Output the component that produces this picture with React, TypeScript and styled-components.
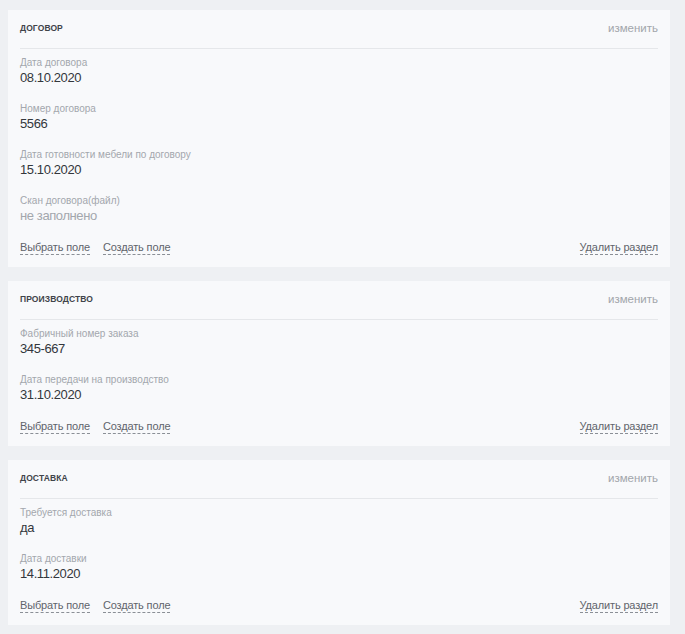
import React from "react";
import styled, { createGlobalStyle } from "styled-components";

const GlobalStyle = createGlobalStyle`
  html, body {
    margin: 0;
    padding: 0;
    background: #eef0f3;
  }
  body {
    font-family: "Liberation Sans", Arial, sans-serif;
    -webkit-font-smoothing: antialiased;
  }
`;

// Page layout
const Page = styled.div`
  display: flex;
  flex-direction: column;
  gap: 14px;
  padding: 10px 15px 8px 8px;
  min-height: 634px;
  box-sizing: border-box;
`;

// Section card
const Card = styled.section`
  background: #f8f9fb;
  padding: 0 12px 12px;
`;

const CardHeader = styled.div`
  display: flex;
  align-items: center;
  justify-content: space-between;
  height: 39px;
  padding-bottom: 2px;
  box-sizing: border-box;
  border-bottom: 1px solid #e5e7ea;
`;

const CardTitle = styled.h3`
  margin: 0;
  font-size: 8.5px;
  font-weight: 700;
  color: #3f4349;
  text-transform: uppercase;
  letter-spacing: 0.1px;
`;

const EditLink = styled.span`
  font-size: 11.5px;
  color: #a2a6ab;
  cursor: pointer;
`;

const FieldList = styled.div`
  display: flex;
  flex-direction: column;
  gap: 17px;
  padding-top: 8px;
`;

const Field = styled.div`
  display: flex;
  flex-direction: column;
  gap: 1px;
`;

const FieldLabel = styled.span`
  font-size: 10px;
  line-height: 12px;
  color: #a3a7ad;
`;

const FieldValue = styled.span<{ $empty?: boolean }>`
  font-size: 13px;
  line-height: 16px;
  letter-spacing: -0.4px;
  color: ${(p) => (p.$empty ? "#a3a7ad" : "#33373c")};
`;

const CardFooter = styled.div`
  display: flex;
  align-items: center;
  gap: 13px;
  margin-top: 17px;
`;

const ActionLink = styled.span<{ $push?: boolean }>`
  display: inline-block;
  font-size: 11px;
  line-height: 13px;
  letter-spacing: -0.15px;
  color: #5f646b;
  border-bottom: 1px dashed #8a8f96;
  cursor: pointer;
  ${(p) => (p.$push ? "margin-left: auto;" : "")}
`;

type FieldData = { label: string; value?: string };
type SectionData = { title: string; fields: FieldData[] };

const sections: SectionData[] = [
  {
    title: "Договор",
    fields: [
      { label: "Дата договора", value: "08.10.2020" },
      { label: "Номер договора", value: "5566" },
      { label: "Дата готовности мебели по договору", value: "15.10.2020" },
      { label: "Скан договора(файл)" },
    ],
  },
  {
    title: "Производство",
    fields: [
      { label: "Фабричный номер заказа", value: "345-667" },
      { label: "Дата передачи на производство", value: "31.10.2020" },
    ],
  },
  {
    title: "Доставка",
    fields: [
      { label: "Требуется доставка", value: "да" },
      { label: "Дата доставки", value: "14.11.2020" },
    ],
  },
];

export default function App(): JSX.Element {
  return (
    <>
      <GlobalStyle />
      <Page>
        {sections.map((section) => (
          <Card key={section.title}>
            <CardHeader>
              <CardTitle>{section.title}</CardTitle>
              <EditLink>изменить</EditLink>
            </CardHeader>
            <FieldList>
              {section.fields.map((field) => (
                <Field key={field.label}>
                  <FieldLabel>{field.label}</FieldLabel>
                  <FieldValue $empty={!field.value}>
                    {field.value ?? "не заполнено"}
                  </FieldValue>
                </Field>
              ))}
            </FieldList>
            <CardFooter>
              <ActionLink>Выбрать поле</ActionLink>
              <ActionLink>Создать поле</ActionLink>
              <ActionLink $push>Удалить раздел</ActionLink>
            </CardFooter>
          </Card>
        ))}
      </Page>
    </>
  );
}
